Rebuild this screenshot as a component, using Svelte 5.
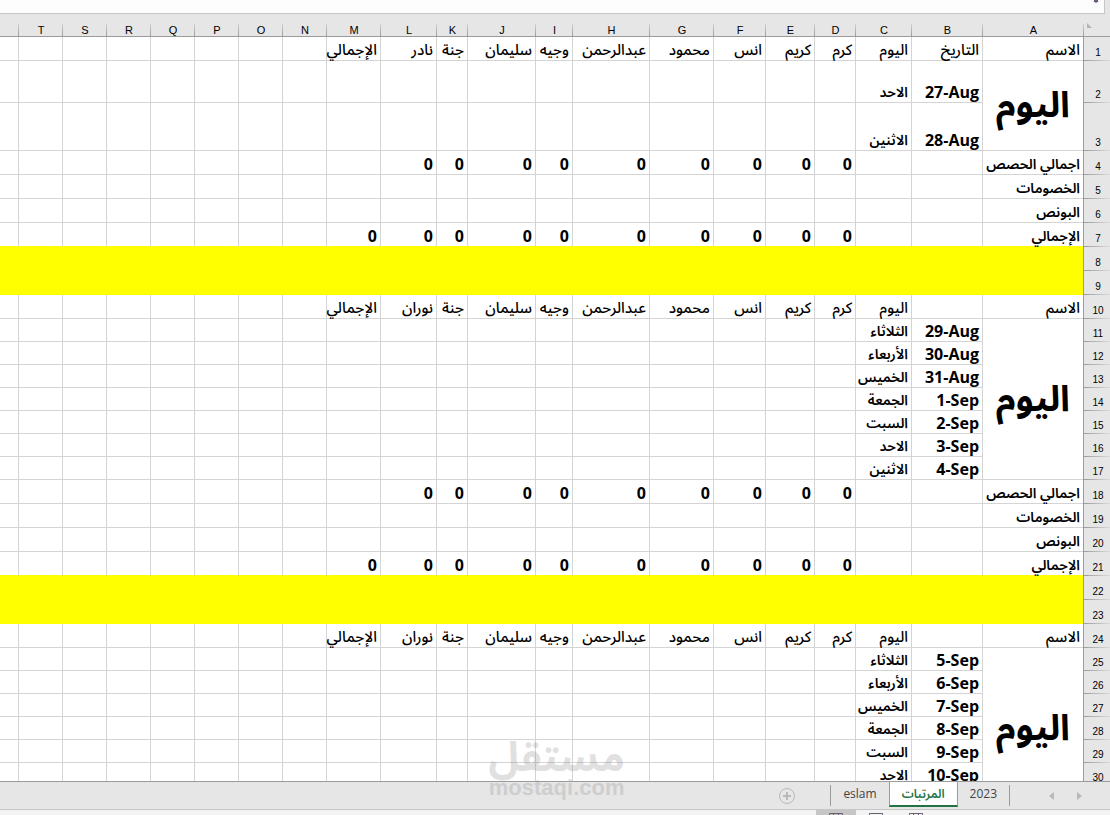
<script lang="ts">
	type Row = {
		n: number;
		kind: 'head' | 'day' | 'line' | 'band';
		label?: string;
		span?: number;
		height?: 'mid' | 'tall' | 'short';
		cells?: string[];
	};

	const letters = 'ABCDEFGHIJKLMNOPQRSTU'.split('');
	const days = ['الثلاثاء', 'الأربعاء', 'الخميس', 'الجمعة', 'السبت', 'الاحد', 'الاثنين'];

	function names(last: string, date = '') {
		return [date, 'اليوم', 'كرم', 'كريم', 'انس', 'محمود', 'عبدالرحمن', 'وجيه', 'سليمان', 'جنة', last, 'الإجمالي'];
	}

	function zeros(count: number) {
		return ['', '', ...Array(count).fill('0')];
	}

	function totals(start: number): Row[] {
		return [
			{ n: start, kind: 'line', label: 'اجمالي الحصص', cells: zeros(9) },
			{ n: start + 1, kind: 'line', label: 'الخصومات' },
			{ n: start + 2, kind: 'line', label: 'البونص' },
			{ n: start + 3, kind: 'line', label: 'الإجمالي', cells: zeros(10) },
			{ n: start + 4, kind: 'band' },
			{ n: start + 5, kind: 'band' }
		];
	}

	function week(start: number, dates: string[]): Row[] {
		return dates.map((date, i) => ({
			n: start + i,
			kind: 'day',
			height: 'short',
			label: i === 0 ? 'اليوم' : undefined,
			span: dates.length,
			cells: [date, days[i]]
		}));
	}

	const rows: Row[] = [
		{ n: 1, kind: 'head', label: 'الاسم', cells: names('نادر', 'التاريخ') },
		{ n: 2, kind: 'day', height: 'mid', label: 'اليوم', span: 2, cells: ['27-Aug', 'الاحد'] },
		{ n: 3, kind: 'day', height: 'tall', cells: ['28-Aug', 'الاثنين'] },
		...totals(4),
		{ n: 10, kind: 'head', label: 'الاسم', cells: names('نوران') },
		...week(11, ['29-Aug', '30-Aug', '31-Aug', '1-Sep', '2-Sep', '3-Sep', '4-Sep']),
		...totals(18),
		{ n: 24, kind: 'head', label: 'الاسم', cells: names('نوران') },
		...week(25, ['5-Sep', '6-Sep', '7-Sep', '8-Sep', '9-Sep', '10-Sep', '11-Sep'])
	];

	const sheets = ['2023', 'المرتبات', 'eslam'];
	let active = $state('المرتبات');
</script>

<div class="app" dir="rtl">
	<div class="formula">
		<input type="text" aria-label="Formula bar" />
		<button class="expand" aria-label="Expand formula bar">
			<svg width="8" height="4" viewBox="0 0 8 4"><path d="M2 0h4v1h1L4 3 1 1h1z" fill="#6b5b73" /></svg>
		</button>
	</div>

	<div class="grid">
		<table>
			<colgroup>
				<col class="c-num" />
				{#each letters as l}
					<col class="c-{l}" />
				{/each}
			</colgroup>
			<thead>
				<tr>
					<th class="corner">
						<svg width="5" height="5" viewBox="0 0 5 5"><path d="M0 0v5h5z" fill="#b4b4b4" /></svg>
					</th>
					{#each letters as l}
						<th scope="col">{l === 'U' ? '' : l}</th>
					{/each}
				</tr>
			</thead>
			<tbody>
				{#each rows as row (row.n)}
					<tr class="{row.kind} {row.height ?? ''}">
						<th scope="row">{row.n}</th>
						{#if row.kind !== 'day'}
							<td>{row.label ?? ''}</td>
						{:else if row.label}
							<td class="today" rowspan={row.span}>{row.label}</td>
						{/if}
						{#each letters.slice(1) as l, i}
							{@const value = row.cells?.[i] ?? ''}
							<td class:num={/^\d/.test(value)}>{#if value}<bdi>{value}</bdi>{/if}</td>
						{/each}
					</tr>
				{/each}
			</tbody>
		</table>
	</div>

	<div class="tabs">
		<div class="scroll">
			<button aria-label="Previous sheet">
				<svg width="6" height="8" viewBox="0 0 6 8"><path d="M0 0v8l5-4z" fill="#b9b9b9" /></svg>
			</button>
			<button aria-label="Next sheet">
				<svg width="6" height="8" viewBox="0 0 6 8"><path d="M5 0v8L0 4z" fill="#b9b9b9" /></svg>
			</button>
		</div>
		<div class="sheets">
			{#each sheets as sheet}
				<button class="sheet" class:active={sheet === active} onclick={() => (active = sheet)}>{sheet}</button>
			{/each}
		</div>
		<button class="add" aria-label="New sheet">
			<svg width="16" height="16" viewBox="0 0 16 16" fill="none" stroke="#b9b9b9">
				<circle cx="8" cy="8" r="7.5" />
				<path d="M8 4v8M4 8h8" stroke-width="2" />
			</svg>
		</button>
	</div>

	<div class="status">
		<button aria-label="Page break preview">
			<svg width="14" height="12" viewBox="0 0 14 12" fill="none" stroke="#6b5b73"><path d="M.5.5h13v11H.5zM4.5 0v12M9.5 0v12M0 3.5h14" /></svg>
		</button>
		<button aria-label="Page layout">
			<svg width="14" height="12" viewBox="0 0 14 12" fill="none" stroke="#6b5b73"><path d="M.5.5h13v11H.5zM3 3.5h8" /></svg>
		</button>
		<button class="on" aria-label="Normal view">
			<svg width="14" height="12" viewBox="0 0 14 12" fill="none" stroke="#6b5b73"><path d="M.5.5h13v11H.5zM4.5 0v12M9.5 0v12M0 3.5h14" /></svg>
		</button>
	</div>

	<div class="watermark">
		<span class="mark">مستقل</span>
		<span class="site" dir="ltr">mostaqi.com</span>
	</div>
</div>

<style>
	:global(body) {
		margin: 0;
		overflow: hidden;
	}

	.app {
		position: relative;
		display: flex;
		flex-direction: column;
		height: 100vh;
		overflow: hidden;
		background: #e6e6e6;
		font-family: 'Open Sans', 'Noto Sans Arabic', 'DejaVu Sans', sans-serif;
		color: #000;
	}

	button {
		margin: 0;
		padding: 0;
		border: 0;
		background: none;
		font: inherit;
		color: inherit;
		cursor: pointer;
	}

	.formula {
		display: flex;
		flex: none;
		align-items: flex-start;
		height: 13px;
		margin-right: 5px;
		border: solid #c6c6c6;
		border-width: 0 1px 1px 0;
		background: #fdfdfd;
	}

	.formula input {
		order: 1;
		flex: 1;
		min-width: 0;
		height: 12px;
		padding: 0;
		border: 0;
		outline: 0;
		background: none;
	}

	.expand {
		display: flex;
		padding-right: 4px;
	}

	.grid {
		flex: 1;
		min-height: 0;
		overflow: hidden;
		background: #fff;
	}

	table {
		width: 100%;
		table-layout: fixed;
		border-collapse: separate;
		border-spacing: 0;
	}

	col { width: 44px; }
	.c-num { width: 27px; }
	.c-A { width: 101px; }
	.c-B { width: 71px; }
	.c-C { width: 56px; }
	.c-D { width: 41px; }
	.c-E { width: 49px; }
	.c-F { width: 52px; }
	.c-G { width: 64px; }
	.c-H { width: 77px; }
	.c-I { width: 37px; }
	.c-J { width: 68px; }
	.c-K { width: 31px; }
	.c-L { width: 56px; }
	.c-M { width: 54px; }
	.c-U { width: auto; }

	th {
		padding: 0 0 0 2px;
		background: #e6e6e6;
		font: 10px/16px 'Liberation Sans', Arial, sans-serif;
		vertical-align: bottom;
	}

	thead th {
		height: 22px;
		box-sizing: content-box;
		border-bottom: 1px solid #9b9b9b;
		background: linear-gradient(#d0d0d0, #9b9b9b) left bottom / 1px 12px no-repeat #e6e6e6;
		font-size: 11px;
		line-height: 12px;
	}

	thead .corner {
		padding: 0;
		vertical-align: middle;
	}

	.corner svg {
		display: block;
		margin-right: 18px;
	}

	tbody th {
		border-left: 1px solid #9b9b9b;
		background: linear-gradient(to right, #9b9b9b, #dadada) left bottom / 100% 1px no-repeat #e6e6e6;
	}

	tbody tr { height: 24px; }
	tbody .short { height: 23px; }
	tbody .mid { height: 42px; }
	tbody .tall { height: 48px; }

	td {
		padding: 0 3px 0 0;
		border: solid #d4d4d4;
		border-width: 0 0 1px 1px;
		font-size: 14px;
		font-weight: 600;
		line-height: 20px;
		text-align: right;
		vertical-align: bottom;
		white-space: nowrap;
	}

	td:last-child,
	thead th:last-child {
		border-left: 0;
		background-image: none;
	}

	.head td {
		font-size: 15px;
		font-weight: 500;
		line-height: 22px;
	}

	.num {
		font-size: 16px;
		font-weight: 700;
	}

	.today {
		padding: 0 0 3px;
		font-size: 36px;
		font-weight: 700;
		line-height: 48px;
		text-align: center;
		vertical-align: middle;
	}

	.line:has(+ .band) td {
		border-bottom-color: #ff0;
	}

	.band td {
		border-color: #ff0;
		background: #ff0;
	}

	.tabs {
		display: flex;
		flex: none;
		height: 27px;
		border: solid #9b9b9b;
		border-width: 1px 0;
		border-bottom-color: #c6c6c6;
		font-size: 12px;
		color: #444;
	}

	.scroll {
		display: flex;
		width: 84px;
		padding-right: 16px;
	}

	.scroll button {
		display: flex;
		align-items: center;
		justify-content: center;
		width: 28px;
	}

	.sheets {
		display: flex;
		align-items: flex-start;
		border: solid #9b9b9b;
		border-width: 0 1px;
		margin: 3px 0;
	}

	.sheet {
		height: 24px;
		margin-top: -3px;
		padding: 0 12px;
		line-height: 24px;
	}

	.sheet.active {
		height: 25px;
		border: solid #9b9b9b;
		border-width: 0 1px;
		border-bottom: 2px solid #217346;
		background: #fff;
		color: #217346;
		font-weight: 600;
	}

	.add {
		display: flex;
		align-items: center;
		margin-right: 35px;
	}

	.status {
		display: flex;
		flex: none;
		height: 5px;
		padding-right: 174px;
		overflow: hidden;
		background: #f3f3f3;
	}

	.status button {
		display: flex;
		justify-content: center;
		width: 40px;
		padding-top: 3px;
	}

	.status .on {
		background: #c6c6c6;
	}

	.watermark {
		position: absolute;
		bottom: 16px;
		left: 44%;
		display: flex;
		flex-direction: column;
		align-items: center;
		opacity: 0.25;
		color: #888;
		pointer-events: none;
	}

	.mark {
		font-size: 41px;
		font-weight: 700;
		line-height: 44px;
	}

	.site {
		font: 700 22px/22px 'Liberation Sans', Arial, sans-serif;
	}
</style>
